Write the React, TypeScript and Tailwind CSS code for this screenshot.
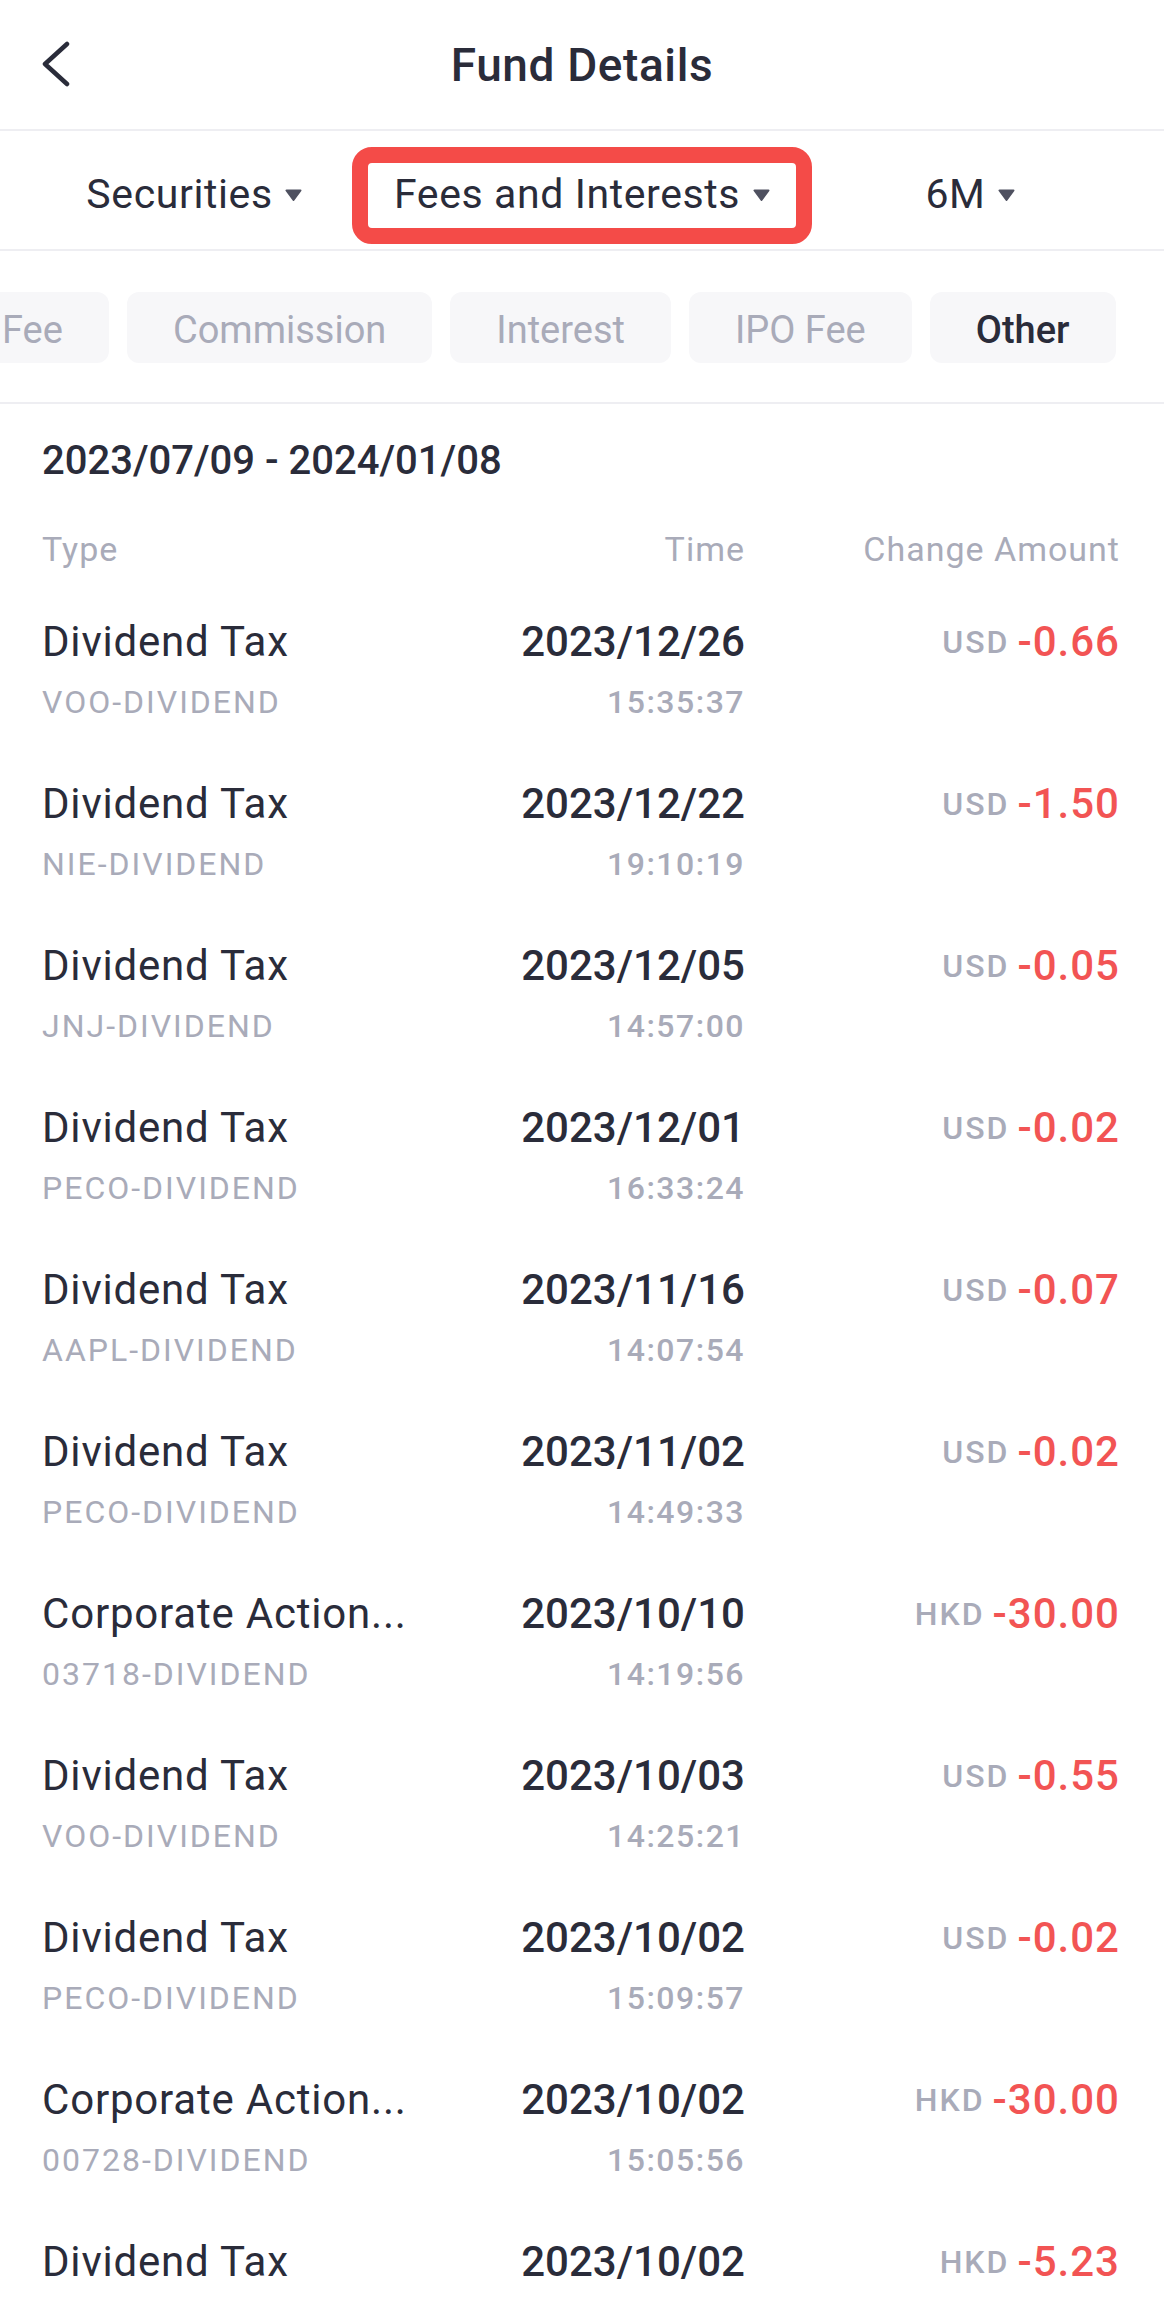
import React from 'react'

const rows = [
  { type: 'Dividend Tax', sub: 'VOO-DIVIDEND', date: '2023/12/26', time: '15:35:37', cur: 'USD', amount: '-0.66' },
  { type: 'Dividend Tax', sub: 'NIE-DIVIDEND', date: '2023/12/22', time: '19:10:19', cur: 'USD', amount: '-1.50' },
  { type: 'Dividend Tax', sub: 'JNJ-DIVIDEND', date: '2023/12/05', time: '14:57:00', cur: 'USD', amount: '-0.05' },
  { type: 'Dividend Tax', sub: 'PECO-DIVIDEND', date: '2023/12/01', time: '16:33:24', cur: 'USD', amount: '-0.02' },
  { type: 'Dividend Tax', sub: 'AAPL-DIVIDEND', date: '2023/11/16', time: '14:07:54', cur: 'USD', amount: '-0.07' },
  { type: 'Dividend Tax', sub: 'PECO-DIVIDEND', date: '2023/11/02', time: '14:49:33', cur: 'USD', amount: '-0.02' },
  { type: 'Corporate Action...', sub: '03718-DIVIDEND', date: '2023/10/10', time: '14:19:56', cur: 'HKD', amount: '-30.00' },
  { type: 'Dividend Tax', sub: 'VOO-DIVIDEND', date: '2023/10/03', time: '14:25:21', cur: 'USD', amount: '-0.55' },
  { type: 'Dividend Tax', sub: 'PECO-DIVIDEND', date: '2023/10/02', time: '15:09:57', cur: 'USD', amount: '-0.02' },
  { type: 'Corporate Action...', sub: '00728-DIVIDEND', date: '2023/10/02', time: '15:05:56', cur: 'HKD', amount: '-30.00' },
  // last row is cut by the screen edge, only its first line shows
  { type: 'Dividend Tax', sub: '', date: '2023/10/02', time: '', cur: 'HKD', amount: '-5.23' },
]

function Caret() {
  return (
    <svg width="17" height="12" viewBox="0 0 17 12" className="shrink-0">
      <path d="M1.5 1.5 H15.5 L8.5 11 Z" fill="#4f5160" stroke="#4f5160" strokeWidth="2" strokeLinejoin="round" />
    </svg>
  )
}

export default function App() {
  return (
    <div className="w-[1164px] h-[2308px] overflow-hidden bg-white text-[#2a2c3a] font-['Roboto',sans-serif]">
      {/* header */}
      <div className="grid grid-cols-[1fr_auto_1fr] items-center h-[131px] px-[41px] border-b-2 border-[#eeeef2]">
        <svg width="30" height="46" viewBox="0 0 30 46" className="-mt-[2px]">
          <path d="M26 3 L4 23 L26 43" fill="none" stroke="#2a2c3a" strokeWidth="4.5" strokeLinecap="round" strokeLinejoin="round" />
        </svg>
        <h1 className="text-[46px] tracking-[0.6px] font-medium leading-none">Fund Details</h1>
        <div />
      </div>

      {/* tabs */}
      <div className="grid grid-cols-3 h-[120px] pt-[10px] border-b-2 border-[#eeeef2] text-[41px] tracking-[0.6px] whitespace-nowrap">
        <div className="flex items-center justify-center gap-[12px]">
          <span>Securities</span>
          <Caret />
        </div>
        <div className="flex items-center justify-center">
          <div className="shrink-0 flex items-center gap-[13px] h-[97px] px-[26px] border-[16px] border-[#f44b48] rounded-[20px]">
            <span>Fees and Interests</span>
            <Caret />
          </div>
        </div>
        <div className="flex items-center justify-center gap-[12px]">
          <span>6M</span>
          <Caret />
        </div>
      </div>

      {/* category chips */}
      <div className="pt-[41px] pb-[39px] border-b-2 border-[#eeeef2] overflow-hidden">
        <div className="flex gap-[18px] -ml-[44px] text-[38px] text-[#a9abb9] whitespace-nowrap">
          <div className="h-[71px] pt-[6px] px-[46px] flex items-center rounded-[12px] bg-[#f7f7f9] shrink-0">Fee</div>
          <div className="h-[71px] pt-[6px] px-[46px] flex items-center rounded-[12px] bg-[#f7f7f9] shrink-0">Commission</div>
          <div className="h-[71px] pt-[6px] px-[46px] flex items-center rounded-[12px] bg-[#f7f7f9] shrink-0">Interest</div>
          <div className="h-[71px] pt-[6px] px-[46px] flex items-center rounded-[12px] bg-[#f7f7f9] shrink-0">IPO Fee</div>
          <div className="h-[71px] pt-[6px] px-[46px] flex items-center rounded-[12px] bg-[#f7f7f9] shrink-0 font-medium text-[#2a2c3a]">Other</div>
        </div>
      </div>

      <div className="pl-[42px] pr-[44px]">
        <div className="mt-[32px] h-[50px] leading-[50px] text-[40px] font-medium">2023/07/09 - 2024/01/08</div>

        <div className="mt-[43px] flex h-[40px] leading-[40px] text-[34px] tracking-[1px] text-[#a9abb9]">
          <div className="flex-1">Type</div>
          <div className="text-right">Time</div>
          <div className="w-[375px] text-right">Change Amount</div>
        </div>

        {rows.map((r, i) => (
          <div key={i} className="flex pt-[48px] pb-[9px]">
            <div className="flex-1">
              <div className="h-[50px] leading-[50px] text-[42px] tracking-[0.8px]">{r.type}</div>
              {r.sub && (
                <div className="mt-[15px] h-[40px] leading-[40px] text-[32px] tracking-[2px] text-[#a9abb9]">{r.sub}</div>
              )}
            </div>
            <div className="text-right">
              <div className="h-[50px] leading-[50px] text-[42px] font-medium">{r.date}</div>
              {r.time && (
                <div className="mt-[15px] h-[40px] leading-[40px] text-[32px] tracking-[1.5px] font-medium text-[#a9abb9]">{r.time}</div>
              )}
            </div>
            <div className="w-[375px] h-[50px] flex items-center justify-end gap-[8px]">
              <span className="text-[32px] tracking-[2px] font-medium text-[#a9abb9] leading-none">{r.cur}</span>
              <span className="text-[42px] tracking-[1px] font-medium text-[#f25454] leading-none">{r.amount}</span>
            </div>
          </div>
        ))}
      </div>
    </div>
  )
}
